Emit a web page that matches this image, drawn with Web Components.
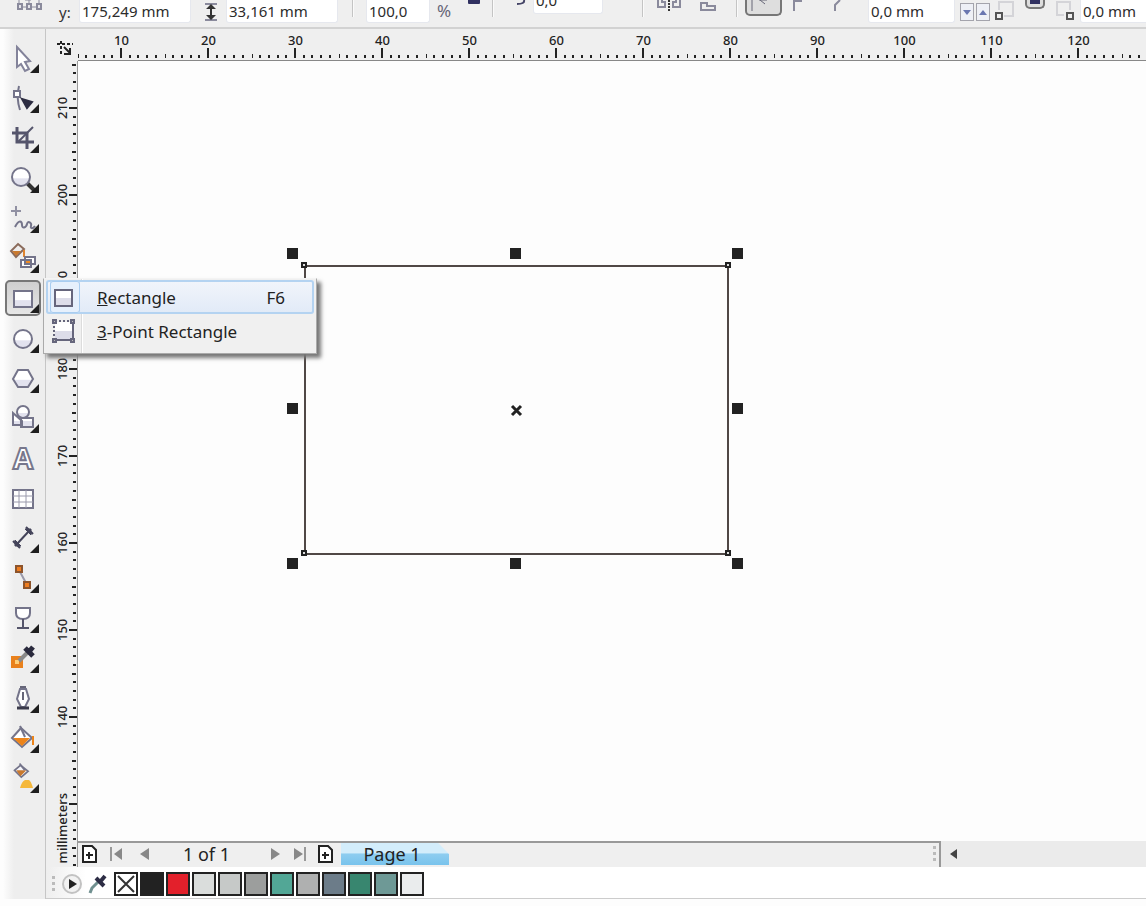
<!DOCTYPE html>
<html lang="en">
<head>
<meta charset="utf-8">
<title>Vector drawing</title>
<style>
html,body{margin:0;height:100%}
body{font-family:"Noto Sans","Open Sans",sans-serif;color:#222;background:#fdfdfd;overflow:hidden}
</style>
</head>
<body>
<draw-app></draw-app>
<script>
const define = (name, html, setup) => customElements.define(name, class extends HTMLElement {
  connectedCallback() {
    if (this.shadowRoot) return;
    const root = this.attachShadow({ mode: 'open' });
    const t = document.createElement('template');
    t.innerHTML = typeof html === 'function' ? html(this) : html;
    root.append(t.content.cloneNode(true));
    if (setup) setup(root, this);
  }
});

/* ---- property bar ---- */
define('prop-field', el => `<style>
:host{display:block;flex:none;width:var(--w,112px)}
input{box-sizing:border-box;display:block;width:100%;height:23px;padding:0 2px;border:1px solid #e6e8ee;border-top:0;border-radius:0 0 3px 3px;background:#fff;font:15px "Noto Sans",sans-serif;color:#2c2c2c;outline:0}
:host([raised]) input{height:27px;margin-top:-13px}
</style><input type="text" aria-label="${el.getAttribute('label')}" value="${el.getAttribute('value')}">`);

define('bar-divider', `<style>:host{display:block;flex:none;width:1px;height:17px;background:#c4c4c4;border-right:1px solid #fafafa}</style>`);

define('property-bar', `<style>
:host{display:block;flex:none;height:27px;border-bottom:2px solid #d2d2d2;background:#efefef;overflow:hidden}
.bar{display:flex;align-items:flex-start;height:27px}
.bar>*{flex:none}
svg{display:block;width:100%;height:27px;fill:none;stroke:#8a8a9c;stroke-width:2}
button{padding:0;border:0;background:none}
.y{margin-left:14px;width:20px;font-size:15px;line-height:24px;color:#333}
.unit{width:16px;margin-left:7px;font-size:17px;line-height:22px;color:#667}
.spin{box-sizing:border-box;width:14px;height:18px;margin:3px 0 0 5px;border:1px solid #a4a4ac;background:#eef0f6}
.spin+.spin{margin-left:2px}
.spin svg{height:16px;stroke:none;fill:#6a76b0}
.on{box-sizing:border-box;border:2px solid #777;border-top:0;border-radius:0 0 5px 5px;background:#dedede;overflow:hidden}
</style>
<div class="bar">
<svg style="width:28px;margin-left:17px" viewBox="0 0 28 27"><path d="M5 7h4M15 7h4M2 0v4M12 0v4M22 0v4M8 0h6" stroke-width="1"/><path d="M1 4h4v5H1zM10 4h4v5h-4zM20 4h4v5h-4z" fill="#e4e4ea"/></svg>
<label class="y">y:</label>
<prop-field label="Vertical position" value="175,249 mm"></prop-field>
<svg style="width:14px;margin-left:13px" viewBox="0 0 14 27"><path d="M1 4h12M1 20h12" stroke="#8a8a9c"/><path d="M7 7v10" stroke="#333"/><path d="M7 4l5 5H2zM7 20l5-5H2z" fill="#333" stroke="none"/></svg>
<prop-field label="Height" value="33,161 mm" style="margin-left:8px"></prop-field>
<bar-divider style="margin-left:14px"></bar-divider>
<prop-field label="Scale factor" value="100,0" style="--w:64px;margin-left:12px"></prop-field>
<span class="unit">%</span>
<svg style="width:12px;margin-left:15px" viewBox="0 0 12 27"><path d="M0 0h12v3q0 1-1 1H1q-1 0-1-1z" fill="#303060" stroke="none"/></svg>
<bar-divider style="margin-left:12px"></bar-divider>
<svg style="width:10px;margin-left:22px" viewBox="0 0 10 27"><path d="M8 0q1 4-7 4" stroke="#444466"/></svg>
<prop-field raised label="Angle of rotation" value="0,0" style="--w:70px;margin-left:7px"></prop-field>
<bar-divider style="margin-left:39px"></bar-divider>
<button aria-label="Mirror horizontally" style="width:24px;margin-left:13px"><svg viewBox="0 0 24 27"><path d="M1 0v7h7V2H5V0M23 0v7h-7V2h3V0"/><path d="M12 0v11" stroke="#333" stroke-dasharray="2 1"/></svg></button>
<button aria-label="Mirror vertically" style="width:16px;margin-left:19px"><svg viewBox="0 0 16 27"><path d="M1 3h6v3h8v4H1z"/></svg></button>
<bar-divider style="margin-left:20px"></bar-divider>
<button class="on" aria-label="Round corner" style="width:37px;height:16px;margin-left:7px"><svg viewBox="0 0 33 27"><path d="M5 11V0M12 0h8M13 0l5 4" stroke-width="1" stroke="#667"/></svg></button>
<button aria-label="Scalloped corner" style="width:10px;margin-left:11px"><svg viewBox="0 0 10 27"><path d="M1 11V1h8"/></svg></button>
<button aria-label="Chamfered corner" style="width:9px;margin-left:30px"><svg viewBox="0 0 9 27"><path d="M2 11V5l5-5"/></svg></button>
<prop-field label="Corner radius left" value="0,0 mm" style="--w:87px;margin-left:26px"></prop-field>
<button class="spin" aria-label="Decrease"><svg viewBox="0 0 12 16"><path d="M2 6h8l-4 5z"/></svg></button>
<button class="spin" aria-label="Increase"><svg viewBox="0 0 12 16"><path d="M2 11h8L6 6z"/></svg></button>
<svg style="width:20px;margin-left:5px" viewBox="0 0 20 27"><path d="M4 10V2h14v14H9" stroke="#d4d4d8"/><path d="M1 13h6v6H1z" stroke="#555"/></svg>
<button class="on" aria-label="Edit corners together" style="width:20px;height:9px;margin-left:10px"><svg viewBox="0 0 16 27"><path d="M3 0h10v4H3z" fill="#303060" stroke="none"/></svg></button>
<svg style="width:20px;margin-left:10px" viewBox="0 0 20 27"><path d="M9 15H2V2h13v8" stroke="#d4d4d8"/><path d="M12 13h6v6h-6z" stroke="#555"/></svg>
<prop-field label="Corner radius right" value="0,0 mm" style="--w:87px;margin-left:5px"></prop-field>
</div>`);

/* ---- toolbox ---- */
const bucket = '<path d="M17 5l9 7-8 7-8-8z" fill="#f6f6fa"/><path d="M12 11h12l-7 7z" fill="#c9792e" stroke="none"/><path d="M16 3l6 8"/>';
const icons = {
  Pick: '<path d="M17 7l13 14-5 1 4 7-4 2-4-7-4 3z" fill="#fff" stroke="#83839a"/>',
  Shape: '<path d="M19 6q-3 12 1 24"/><path d="M14 11h6v6h-6z" fill="#fff"/><path d="M22 19l10 3-5 6z" fill="#2d2d42" stroke="#2d2d42"/>',
  Crop: '<path d="M17 7v15h17M12 13h15v16" stroke-width="3" stroke="#55556c"/><path d="M33 7L18 22" stroke="#55556c"/>',
  Zoom: '<path d="M27 23l8 8" stroke="#333" stroke-width="4"/><circle cx="21" cy="17" r="9" fill="url(#g)"/>',
  Freehand: '<path d="M16 6v10M11 11h10" stroke="#9090a2"/><path d="M15 27c4-8 7-6 7-2s4 3 5-1 5-1 4 2 2 3 4 0"/>',
  'Smart fill': '<path d="M18 4l6 5-8 8-5-6z" fill="#eee" stroke="#8a6a5a"/><path d="M12 11h9l-5 5z" fill="#c9792e" stroke="none"/><path d="M24 10v7" stroke="#e08530"/><path d="M21 20h10v7H21zM25 17h10v7H25z" fill="#fff"/><path d="M25 20h6v4h-6z" fill="#ee8b24"/>',
  Rectangle: '<path d="M14 11h18v16H14z" fill="url(#g)"/>',
  Ellipse: '<circle cx="23" cy="19" r="9" fill="url(#g)"/>',
  Polygon: '<path d="M18 10h10l5 9-5 8H18l-5-8z" fill="url(#g)"/>',
  'Basic shapes': '<path d="M13 13l9 8v4h-9zM21 18h12v9H21z" fill="url(#g)"/><circle cx="23" cy="12" r="6" fill="url(#g)"/>',
  Text: '<text x="23" y="29" text-anchor="middle" font-family="Open Sans, sans-serif" font-weight="700" font-size="29" fill="#fff" stroke="#77778c" stroke-width="2">A</text>',
  Table: '<path d="M13 10h20v18H13z" fill="#fff"/><path d="M19 10v18M26 10v18M13 16h20M13 22h20" stroke-width="1" stroke="#9a9aac"/>',
  Dimension: '<g stroke="#44445a"><path d="M17 24l12-13"/><path d="M13 21l7 7M26 7l7 7" /><path d="M15 20v6h6zM31 15V9h-6z" fill="#44445a" stroke-width="1"/></g>',
  Connector: '<path d="M19 10l7 13" stroke="#9999aa"/><g fill="#ee7d20" stroke="#8d542b"><path d="M16 6h6v6h-6zM24 22h6v6h-6z"/></g>',
  Interactive: '<path d="M16 8h14v5q0 6-7 6t-7-6z" fill="#fff"/><path d="M23 19v9M17 28h12" stroke="#55556b"/>',
  'Color eyedropper': '<path d="M11 16h12v12H11z" fill="#e9811c" stroke="none"/><path d="M15 20h4v4h-4z" fill="#ffcf78" stroke="none"/><path d="M19 21l9-9" stroke="#8a8a8a" stroke-width="4"/><path d="M25 8l8 8M28 13l5-6" stroke="#2a2a3d" stroke-width="5"/>',
  Outline: '<path d="M20 9h6l3 10-4 8h-4l-4-8z" fill="#fff"/><path d="M23 12v8M20 7h6" stroke="#666678"/><path d="M17 28h12" stroke="#3a3a4b" stroke-width="3"/>',
  Fill: '<path d="M21 8l11 10-10 9-10-9z" fill="#fff"/><path d="M13 18h17l-8 8z" fill="#ed8419" stroke="none"/><path d="M20 6l5 11"/><path d="M33 16v9" stroke="#ed8419"/>',
  'Interactive fill': '<g transform="translate(6 1) scale(.85)">' + bucket + '</g><path d="M25 20h4q2 1 4 8H20q2-7 5-8z" fill="#f5b83b" stroke="none"/>'
};
define('tool-button', el => {
  const n = el.getAttribute('name');
  return `<style>
:host{display:block;position:relative;height:40px}
button{display:block;position:relative;width:100%;height:40px;padding:0;border:0;background:none}
svg{display:block;width:46px;height:40px;fill:none;stroke:#74748a;stroke-width:2}
:host([selected])::before{content:"";box-sizing:border-box;position:absolute;left:5px;top:0;width:36px;height:36px;border:2px solid #777;border-radius:5px;background:linear-gradient(#cfcfcf,#e6e6e6)}
</style><button aria-label="${n}"><svg viewBox="0 0 46 40"><defs><linearGradient id="g" x2="0" y2="1"><stop offset=".55" stop-color="#fff"/><stop offset=".6" stop-color="#e2e2ee"/></linearGradient></defs>${icons[n]}${n === 'Text' || n === 'Table' ? '' : '<path d="M39 24v9h-9z" fill="#1e1e1e" stroke="none"/>'}</svg></button><slot></slot>`;
});

define('menu-row', el => `<style>
:host{display:block}
button{box-sizing:border-box;display:grid;grid-template-columns:47px 1fr auto;align-items:center;width:100%;height:34px;padding:0 29px 0 4px;border:0;border-radius:3px;background:none;font:17px "Noto Sans",sans-serif;color:#222;text-align:left}
:host([active]) button{box-shadow:inset 0 0 0 2px #b4d3f1;background:linear-gradient(#f2f5fb,#e1eaf7)}
i{box-sizing:border-box;display:block;width:30px;height:32px;border-radius:3px}
:host([active]) i{box-shadow:inset 0 0 0 1px #a9cdf0;background:#e6f0fc}
</style><button role="menuitem"><i><slot name="icon"></slot></i><span><u>${el.getAttribute('text')[0]}</u>${el.getAttribute('text').slice(1)}</span><span>${el.getAttribute('key') || ''}</span></button>`);

define('fly-out', `<style>
:host{box-sizing:border-box;position:absolute;z-index:5;left:43px;top:-2px;width:274px;height:76px;padding:1px 2px;border:1px solid #aaa;border-top-color:#f4f4f4;background:linear-gradient(90deg,#f0f0f0 37px,#dcdcdc 37px,#dcdcdc 38px,#fff 38px,#fff 39px,#f0f0f0 39px);box-shadow:4px 4px 4px #777}
svg{display:block;width:30px;height:32px;fill:none;stroke:#66667c;stroke-width:2}
</style><menu-row active text="Rectangle" key="F6"><svg slot="icon" viewBox="0 0 30 32"><path d="M5 9h17v16H5z" fill="#fff"/><path d="M6 17h15v7H6z" fill="#dddde9" stroke="none"/></svg></menu-row>
<menu-row text="3-Point Rectangle"><svg slot="icon" viewBox="0 0 30 32"><path d="M5 7h18v18H5z" fill="#fff" stroke="none"/><path d="M5 16h18v9H5z" fill="#dddde9" stroke="none"/><path d="M4 25h19V7"/><path d="M4 25V6h19" stroke-dasharray="2 2"/><path d="M3 5h3v3H3zM21 5h3v3h-3zM3 24h3v3H3zM21 24h3v3h-3z" fill="#bbb"/></svg></menu-row>`);

define('tool-box', `<style>
:host{box-sizing:border-box;display:block;flex:none;width:46px;padding-top:11px;border-right:1px solid #c6c6c6;background:linear-gradient(90deg,#fdfdfd 3px,#eee 14px)}
</style>${Object.keys(icons).map(n => `<tool-button name="${n}"${n === 'Rectangle' ? ' selected><fly-out></fly-out>' : '>'}</tool-button>`).join('')}`);

/* ---- rulers: one cell per ten millimetres, tick centred on the label ---- */
define('ruler-cell', el => {
  const v = el.hasAttribute('vertical');
  let d = '';
  for (let k = -5; k < 5; k++) {
    const p = 43 + Math.round(k * 8.7);
    const len = k === 0 ? (v ? 8 : 10) : k === -5 ? 4 : 3;
    d += v ? `M${k ? 30 - len : 23} ${p}h${len}v2h-${len}z` : `M${p - 1} ${29 - len}h2v${len}h-2z`;
  }
  return `<style>
:host{display:block;position:relative;flex:none;width:87px;height:31px;font-size:13px;font-weight:500;line-height:14px;text-align:center;color:#222}
:host([vertical]){width:31px;height:87px}
svg{display:block;fill:#222}
span{position:absolute;left:0;right:0;top:4px}
:host([vertical]) span{left:9px;right:auto;top:0;bottom:0;writing-mode:vertical-rl;transform:rotate(180deg)}
:host([unit]) span{top:auto;bottom:-16px}
</style><svg width="${v ? 31 : 87}" height="${v ? 87 : 31}"><path d="${d}"/></svg><span><slot></slot></span>`;
});
define('ruler-bar', el => `<style>
:host{display:flex;box-sizing:border-box;min-width:0;height:32px;overflow:hidden;background:#efefef;border-bottom:1px solid #888}
:host([vertical]){flex-direction:column;width:32px;height:auto;min-height:0;padding-top:3px;border:0;border-right:1px solid #999}
</style>${el.hasAttribute('vertical') ? [210, 200, 190, 180, 170, 160, 150, 140].map(n => `<ruler-cell vertical>${n}</ruler-cell>`).join('') + '<ruler-cell vertical unit>millimeters</ruler-cell><ruler-cell vertical></ruler-cell>' : ''}`,
(root, el) => {
  if (el.hasAttribute('vertical')) return;
  /* enough cells for the window; a number that would not fit is left off */
  const fill = () => {
    root.querySelectorAll('ruler-cell').forEach(c => c.remove());
    const width = innerWidth - 78;
    for (let i = 0; i * 87 < width; i++) {
      const c = document.createElement('ruler-cell');
      if (i * 87 + 60 < width) c.textContent = 10 + i * 10;
      root.append(c);
    }
  };
  fill();
  addEventListener('resize', fill);
});

/* ---- drawing ---- */
define('draw-canvas', `<style>
:host{display:block;position:relative;min-width:0;min-height:0;overflow:hidden;background:#fdfdfd}
svg{position:absolute;left:0;top:0;overflow:visible}
</style><svg width="700" height="540" role="img" aria-label="Selected rectangle">
<path d="M227 205h423v288H227z" fill="none" stroke="#504846" stroke-width="2"/>
<g fill="#ddd" stroke="#222" stroke-width="2"><path d="M224 202h4v4h-4zM648 202h4v4h-4zM224 490h4v4h-4zM648 490h4v4h-4z"/></g>
<g fill="#222">${[209, 432, 654].map(x => [187, 342, 497].map(y => x === 432 && y === 342 ? '' : `<path d="M${x} ${y}h11v11h-11z"/>`).join('')).join('')}</g>
<path d="M434 345l9 9M443 345l-9 9" stroke="#222" stroke-width="3"/></svg>`);

/* ---- page navigator and scroll bar ---- */
const addIcon = '<svg width="15" height="18" viewBox="0 0 15 18"><path d="M1 1h9l4 4v12H1z" fill="#fff" stroke="#222" stroke-width="2"/><path d="M4 10h7M7 7v7" stroke="#222" stroke-width="2"/></svg>';
define('page-nav', `<style>
:host{display:flex;min-width:0;height:26px;background:#ebebeb}
nav{box-sizing:border-box;display:flex;align-items:center;flex:0 0 81%;max-width:863px;border-top:2px solid #999;border-right:2px solid #999;background:#efefef;padding:0 0 2px 4px}
button{flex:none;padding:0;border:0;background:none}
nav svg,.left svg{display:block}
.count{width:50px;margin:0 38px 0 34px;font-size:18px;line-height:22px;white-space:nowrap}
.tab{width:108px;height:22px;margin-left:8px;padding-right:6px;background:linear-gradient(#d3edfb 45%,#8ecdf0 50%,#79c3ec);clip-path:polygon(0 0,90% 0,100% 50%,100% 100%,0 100%);font:18px/22px "Noto Sans",sans-serif;color:#222}
.grip{margin-left:auto;margin-right:3px}
.left{margin-left:9px}
</style><nav aria-label="Pages">
<button aria-label="Add page before">${addIcon}</button>
<button aria-label="First page" style="margin-left:13px"><svg width="12" height="14"><path d="M1 0v14" stroke="#999" stroke-width="2"/><path d="M12 1v12L4 7z" fill="#888"/></svg></button>
<button aria-label="Previous page" style="margin-left:18px"><svg width="9" height="14"><path d="M9 1v12L0 7z" fill="#888"/></svg></button>
<span class="count">1 of 1</span>
<button aria-label="Next page"><svg width="9" height="14"><path d="M0 1v12l9-6z" fill="#888"/></svg></button>
<button aria-label="Last page" style="margin-left:14px"><svg width="12" height="14"><path d="M11 0v14" stroke="#999" stroke-width="2"/><path d="M0 1v12l9-6z" fill="#888"/></svg></button>
<button aria-label="Add page after" style="margin-left:12px">${addIcon}</button>
<button class="tab">Page 1</button>
<svg class="grip" width="3" height="18" fill="#bbb"><path d="M0 1h3v3H0zM0 7h3v3H0zM0 13h3v3H0z"/></svg>
</nav><button class="left" aria-label="Scroll left"><svg width="7" height="10"><path d="M7 0v10L0 5z" fill="#444"/></svg></button>`);

/* ---- colour palette ---- */
define('color-palette', `<style>
:host{box-sizing:border-box;display:flex;align-items:center;flex:none;height:32px;padding:2px 0 0 6px;border-bottom:1px solid #ccc;background:linear-gradient(90deg,#eee,#fff 40px)}
button{flex:none;padding:0;border:0;background:none}
svg{display:block;flex:none}
.swatches{display:flex;gap:2px;margin-left:6px}
.swatches button{box-sizing:border-box;width:24px;height:24px;border:2px solid #222}
</style><svg width="4" height="18" fill="#bbb"><path d="M0 1h3v3H0zM0 7h3v3H0zM0 13h3v3H0z"/></svg>
<button aria-label="Palette options" style="margin-left:5px"><svg width="22" height="24"><circle cx="11" cy="12" r="9" fill="#f2f2f2" stroke="#c2c2c2" stroke-width="2"/><path d="M8 7v10l8-5z" fill="#222"/></svg></button>
<button aria-label="Pick colour" style="margin-left:5px"><svg width="20" height="22" fill="none"><path d="M2 20l2-5 7-7" stroke="#709090" stroke-width="3"/><path d="M8 5l8 8M12 9l5-6" stroke="#2d2d45" stroke-width="4"/></svg></button>
<div class="swatches"></div>`, root => {
  const box = root.querySelector('.swatches');
  ['none', '#222', '#e3202b', '#dadddc', '#c6c9c8', '#9c9e9d', '#52a796', '#afb0b0', '#6c7c89', '#38866f', '#6e9996', '#eaeced'].forEach(c => {
    const b = document.createElement('button');
    b.setAttribute('aria-label', 'Colour ' + c);
    if (c === 'none') b.innerHTML = '<svg width="20" height="20"><path d="M2 2l16 16M18 2L2 18" stroke="#333" stroke-width="2"/></svg>';
    else b.style.background = c;
    box.append(b);
  });
});

define('draw-app', `<style>
:host{box-sizing:border-box;display:flex;flex-direction:column;min-height:100vh;padding-bottom:7px}
.work{display:flex;flex:1;min-height:0}
.main{display:flex;flex:1;flex-direction:column;min-width:0}
.grid{position:relative;display:grid;grid-template:32px 1fr 26px / 32px 1fr;flex:1;min-height:0}
.corner{background:#efefef}
.side{grid-row:2 / 4;display:flex;height:0;min-height:100%}
svg{display:block;margin:12px 0 0 11px}
</style><property-bar></property-bar>
<div class="work"><tool-box></tool-box><div class="main">
<div class="grid"><div class="corner"><svg width="16" height="16" fill="none" stroke="#222" stroke-width="2"><path d="M0 3h16M4 0v15" stroke-dasharray="3 2"/><path d="M7 6l6 6M13 7v6H7"/></svg></div>
<ruler-bar></ruler-bar><div class="side"><ruler-bar vertical></ruler-bar></div>
<draw-canvas></draw-canvas><page-nav></page-nav></div>
<color-palette></color-palette></div></div>`);
</script>
</body>
</html>
